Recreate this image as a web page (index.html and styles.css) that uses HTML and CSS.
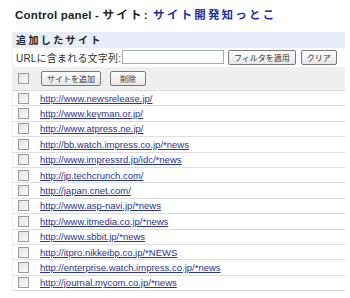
FILE: index.html
```html
<!DOCTYPE html>
<html lang="ja">
<head>
  <meta charset="UTF-8" />
  <title>Control panel - サイト</title>
  <link rel="stylesheet" href="styles.css">
</head>
<body>

<!-- Title -->
<h1 class="title">Control panel - <span class="jp">サイト:</span> <span class="jp site-name">サイト開発知っとこ</span></h1>

<div class="panel">
  <div class="panel-head">追加したサイト</div>

  <!-- Filter -->
  <div class="filter">
    <label for="urlFilter">URLに含まれる文字列:</label>
    <input type="text" id="urlFilter" class="filter-input">
    <button class="btn">フィルタを適用</button>
    <button class="btn">クリア</button>
  </div>

  <!-- Actions -->
  <div class="actions">
    <span class="check"></span>
    <button class="btn btn-wide">サイトを追加</button>
    <button class="btn">削除</button>
  </div>

  <!-- Site list -->
  <ul class="sites">
    <li><span class="check"></span><a href="#">http://www.newsrelease.jp/</a></li>
    <li><span class="check"></span><a href="#">http://www.keyman.or.jp/</a></li>
    <li><span class="check"></span><a href="#">http://www.atpress.ne.jp/</a></li>
    <li><span class="check"></span><a href="#">http://bb.watch.impress.co.jp/*news</a></li>
    <li><span class="check"></span><a href="#">http://www.impressrd.jp/idc/*news</a></li>
    <li><span class="check"></span><a href="#">http://jp.techcrunch.com/</a></li>
    <li><span class="check"></span><a href="#">http://japan.cnet.com/</a></li>
    <li><span class="check"></span><a href="#">http://www.asp-navi.jp/*news</a></li>
    <li><span class="check"></span><a href="#">http://www.itmedia.co.jp/*news</a></li>
    <li><span class="check"></span><a href="#">http://www.sbbit.jp/*news</a></li>
    <li><span class="check"></span><a href="#">http://itpro.nikkeibp.co.jp/*NEWS</a></li>
    <li><span class="check"></span><a href="#">http://enterprise.watch.impress.co.jp/*news</a></li>
    <li><span class="check"></span><a href="#">http://journal.mycom.co.jp/*news</a></li>
  </ul>
</div>

</body>
</html>
```

FILE: styles.css
```css
body {
  background: #fff;
  color: #222;
  font-family: 'Liberation Sans', 'Noto Sans CJK JP', sans-serif;
  margin: 0;
  padding: 8px 5px 0 12px;
}

.title {
  font-size: 11.5px;
  font-weight: bold;
  line-height: 14px;
  margin: 0 0 10px 3px;
  color: #222;
  letter-spacing: 0.2px;
  white-space: nowrap;
}

.title .jp {
  letter-spacing: 2.2px;
}

.site-name {
  color: #1f2f99;
}

.panel {
  border-left: 1px solid #f0f0f0;
}

.panel-head {
  background: #e6edf8;
  font-size: 10px;
  font-weight: bold;
  letter-spacing: 2.4px;
  height: 16px;
  line-height: 17px;
  padding-left: 3px;
}

.filter {
  display: flex;
  align-items: center;
  height: 18px;
  padding-left: 3px;
  font-size: 10px;
  color: #333;
}

.filter label {
  flex-shrink: 0;
  white-space: nowrap;
  letter-spacing: 0.2px;
  width: 106px;
}

.filter-input {
  flex-shrink: 0;
  width: 102px;
  height: 14px;
  box-sizing: border-box;
  border: 1px solid #a5acb5;
  margin: 0 2px 0 0;
  padding: 0;
}

.btn {
  flex-shrink: 0;
  white-space: nowrap;
  font-family: 'Noto Sans CJK JP', sans-serif;
  font-size: 8px;
  line-height: 11px;
  height: 15px;
  min-width: 36px;
  padding: 0 5px;
  margin: 0 3px 0 2px;
  color: #333;
  background: linear-gradient(#fff, #e6e6e6);
  border: 1px solid #7a7a7a;
  border-radius: 2px;
  cursor: pointer;
}

.actions {
  display: flex;
  align-items: center;
  background: #efefef;
  height: 23px;
  margin-top: 1px;
  padding-left: 5px;
  border-bottom: 1px solid #dcdcdc;
}

.actions .check {
  margin-right: 12px;
}

.actions .btn {
  margin: 0 9px 0 0;
}

.actions .btn-wide {
  min-width: 58px;
}

.check {
  display: inline-block;
  width: 9px;
  height: 9px;
  border: 1px solid #9a9a9a;
  background: linear-gradient(135deg, #e2e2e2, #fafafa);
}

.sites {
  list-style: none;
  margin: 0;
  padding: 0;
}

.sites li {
  display: flex;
  align-items: center;
  height: 15.4px;
  box-sizing: border-box;
  padding-left: 5px;
  border-bottom: 1px solid #dedede;
}

.sites .check {
  margin-right: 11px;
}

.sites a {
  color: #2b3490;
  font-size: 9.5px;
  text-decoration: underline;
}
```
